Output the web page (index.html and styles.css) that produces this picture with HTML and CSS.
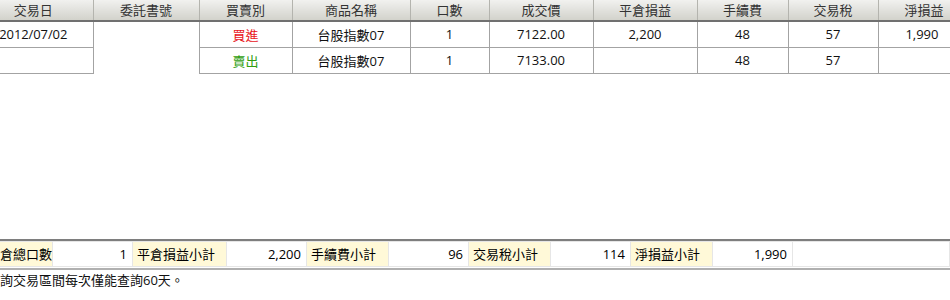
FILE: index.html
```html
<!DOCTYPE html>
<html lang="zh-Hant">
<head>
    <meta charset="UTF-8">
    <meta name="viewport" content="width=device-width, initial-scale=1.0">
    <title>交易明細</title>
    <link rel="stylesheet" href="styles.css">
</head>
<body>
    <div class="grid-wrap">
        <table class="trades">
            <colgroup>
                <col class="w-date">
                <col class="w-order">
                <col class="w-side">
                <col class="w-name">
                <col class="w-qty">
                <col class="w-price">
                <col class="w-pl">
                <col class="w-fee">
                <col class="w-tax">
                <col class="w-net">
            </colgroup>
            <thead>
                <tr>
                    <th>交易日</th>
                    <th>委託書號</th>
                    <th>買賣別</th>
                    <th>商品名稱</th>
                    <th>口數</th>
                    <th>成交價</th>
                    <th>平倉損益</th>
                    <th>手續費</th>
                    <th>交易稅</th>
                    <th>淨損益</th>
                </tr>
            </thead>
            <tbody>
                <tr>
                    <td class="date">2012/07/02</td>
                    <td class="merged" rowspan="2"></td>
                    <td class="buy">買進</td>
                    <td>台股指數07</td>
                    <td>1</td>
                    <td>7122.00</td>
                    <td>2,200</td>
                    <td>48</td>
                    <td>57</td>
                    <td class="net">1,990</td>
                </tr>
                <tr>
                    <td></td>
                    <td class="sell">賣出</td>
                    <td>台股指數07</td>
                    <td>1</td>
                    <td>7133.00</td>
                    <td></td>
                    <td>48</td>
                    <td>57</td>
                    <td></td>
                </tr>
            </tbody>
        </table>
    </div>

    <div class="summary">
        <div class="sum-label first">倉總口數</div>
        <div class="sum-value">1</div>
        <div class="sum-label wide">平倉損益小計</div>
        <div class="sum-value">2,200</div>
        <div class="sum-label">手續費小計</div>
        <div class="sum-value">96</div>
        <div class="sum-label">交易稅小計</div>
        <div class="sum-value">114</div>
        <div class="sum-label">淨損益小計</div>
        <div class="sum-value">1,990</div>
        <div class="sum-rest"></div>
    </div>

    <p class="note">詢交易區間每次僅能查詢60天。</p>
</body>
</html>
```

FILE: styles.css
```css
* {
    margin: 0;
    padding: 0;
    box-sizing: border-box;
}
body {
    background: #fff;
    color: #111;
    font-family: "Open Sans", "Noto Sans CJK TC", sans-serif;
    font-size: 13px;
    overflow: hidden;
}
.grid-wrap {
    height: 239px;
    overflow: hidden;
}
/* table is scrolled a little to the right, so the first column is cut */
.trades {
    margin-left: -26px;
    width: 996px;
    table-layout: fixed;
    border-collapse: collapse;
}
.w-date { width: 119px; }
.w-order { width: 106px; }
.w-side { width: 93px; }
.w-name { width: 118px; }
.w-qty { width: 79px; }
.w-price { width: 104px; }
.w-pl { width: 104px; }
.w-fee { width: 91px; }
.w-tax { width: 90px; }
.w-net { width: 92px; }
.trades th {
    height: 21px;
    padding: 0;
    font-weight: normal;
    color: #333;
    background: linear-gradient(#f1f1ef, #d2d2cb);
    border-right: 1px solid #b4b4ae;
    border-bottom: 2px solid #707070;
    line-height: 18px;
    vertical-align: middle;
}
.trades td {
    height: 26px;
    padding: 0;
    text-align: center;
    border: 1px solid #a3a3a3;
    border-top: none;
    vertical-align: middle;
}
.trades td:first-child {
    border-left: none;
}
.trades td.date {
    letter-spacing: -0.1px;
}
.trades td.merged {
    border-bottom: none;
}
.trades td.net {
    text-align: right;
    padding-right: 31px;
}
.buy {
    color: #e8141a;
}
.sell {
    color: #2f9e0f;
}
.summary {
    display: flex;
    border-top: 2px solid #7e7e7e;
    border-bottom: 2px solid #b0b0b0;
    padding-bottom: 1px;
}
.summary > div {
    height: 26px;
    line-height: 24px;
    border: 1px solid #e6e6e6;
    border-left: none;
    color: #000;
}
.sum-label {
    width: 82px;
    padding-left: 4px;
    background: #fff9d8;
    white-space: nowrap;
}
.sum-label.first {
    width: 53px;
    padding-left: 0;
}
.sum-label.wide {
    width: 94px;
}
.sum-value {
    width: 80px;
    padding-right: 5px;
    text-align: right;
}
.sum-rest {
    flex: 1;
}
.note {
    line-height: 18px;
    padding-top: 1px;
    color: #111;
}
```
